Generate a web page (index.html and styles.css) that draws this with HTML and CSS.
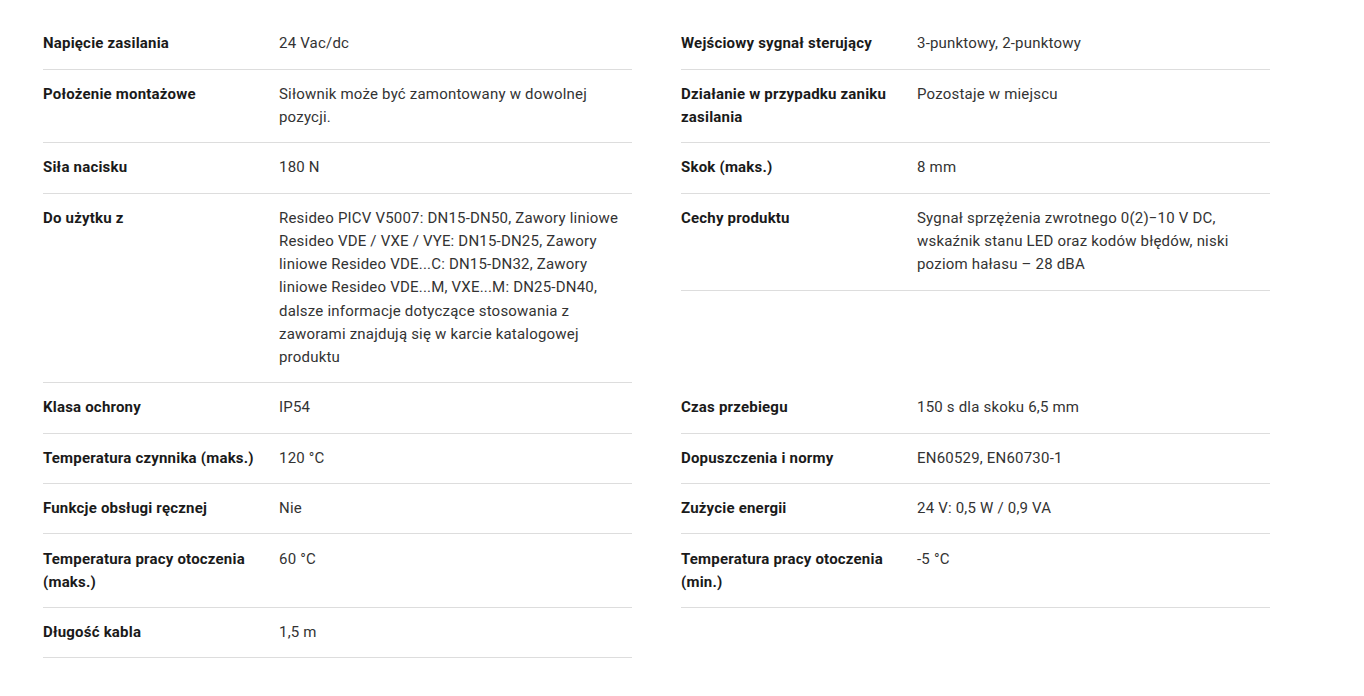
FILE: index.html
```html
<!DOCTYPE html>
<html lang="pl">
<head>
<meta charset="utf-8">
<title>Specyfikacja</title>
<link rel="stylesheet" href="styles.css">
</head>
<body>
<div class="specs">
  <div class="spec"><div class="label">Napięcie zasilania</div><div class="value">24 Vac/dc</div></div>
  <div class="spec"><div class="label">Wejściowy sygnał sterujący</div><div class="value">3-punktowy, 2-punktowy</div></div>

  <div class="spec"><div class="label">Położenie montażowe</div><div class="value">Siłownik może być zamontowany w dowolnej pozycji.</div></div>
  <div class="spec"><div class="label">Działanie w przypadku zaniku zasilania</div><div class="value">Pozostaje w miejscu</div></div>

  <div class="spec"><div class="label">Siła nacisku</div><div class="value">180 N</div></div>
  <div class="spec"><div class="label">Skok (maks.)</div><div class="value">8 mm</div></div>

  <div class="spec"><div class="label">Do użytku z</div><div class="value">Resideo PICV V5007: DN15-DN50, Zawory liniowe Resideo VDE / VXE / VYE: DN15-DN25, Zawory liniowe Resideo VDE...C: DN15-DN32, Zawory liniowe Resideo VDE...M, VXE...M: DN25-DN40, dalsze informacje dotyczące stosowania z zaworami znajdują się w karcie katalogowej produktu</div></div>
  <div class="spec"><div class="label">Cechy produktu</div><div class="value">Sygnał sprzężenia zwrotnego 0(2)−10 V DC, wskaźnik stanu LED oraz kodów błędów, niski poziom hałasu – 28 dBA</div></div>

  <div class="spec"><div class="label">Klasa ochrony</div><div class="value">IP54</div></div>
  <div class="spec"><div class="label">Czas przebiegu</div><div class="value">150 s dla skoku 6,5 mm</div></div>

  <div class="spec"><div class="label">Temperatura czynnika (maks.)</div><div class="value">120 °C</div></div>
  <div class="spec"><div class="label">Dopuszczenia i normy</div><div class="value">EN60529, EN60730-1</div></div>

  <div class="spec"><div class="label">Funkcje obsługi ręcznej</div><div class="value">Nie</div></div>
  <div class="spec"><div class="label">Zużycie energii</div><div class="value">24 V: 0,5 W / 0,9 VA</div></div>

  <div class="spec"><div class="label">Temperatura pracy otoczenia (maks.)</div><div class="value">60 °C</div></div>
  <div class="spec"><div class="label">Temperatura pracy otoczenia (min.)</div><div class="value">-5 °C</div></div>

  <div class="spec"><div class="label">Długość kabla</div><div class="value">1,5 m</div></div>
</div>
</body>
</html>
```
FILE: styles.css
```css
html, body {
  margin: 0;
  padding: 0;
  background: #ffffff;
}

body {
  font-family: Roboto, "Liberation Sans", Arial, sans-serif;
  font-size: 15px;
  line-height: 23.15px;
  letter-spacing: 0.2px;
  color: #333333;
}

.specs {
  display: grid;
  grid-template-columns: 589px 589px;
  column-gap: 49px;
  align-items: start;
  padding: 19.3px 0 0 43px;
}

.spec {
  display: grid;
  grid-template-columns: 236px 1fr;
  padding: 13.15px 0;
  border-bottom: 1px solid #dddddd;
}

.label {
  font-weight: 700;
  color: #1a1a1a;
  padding-right: 20px;
}

.value {
  color: #333333;
}
```
